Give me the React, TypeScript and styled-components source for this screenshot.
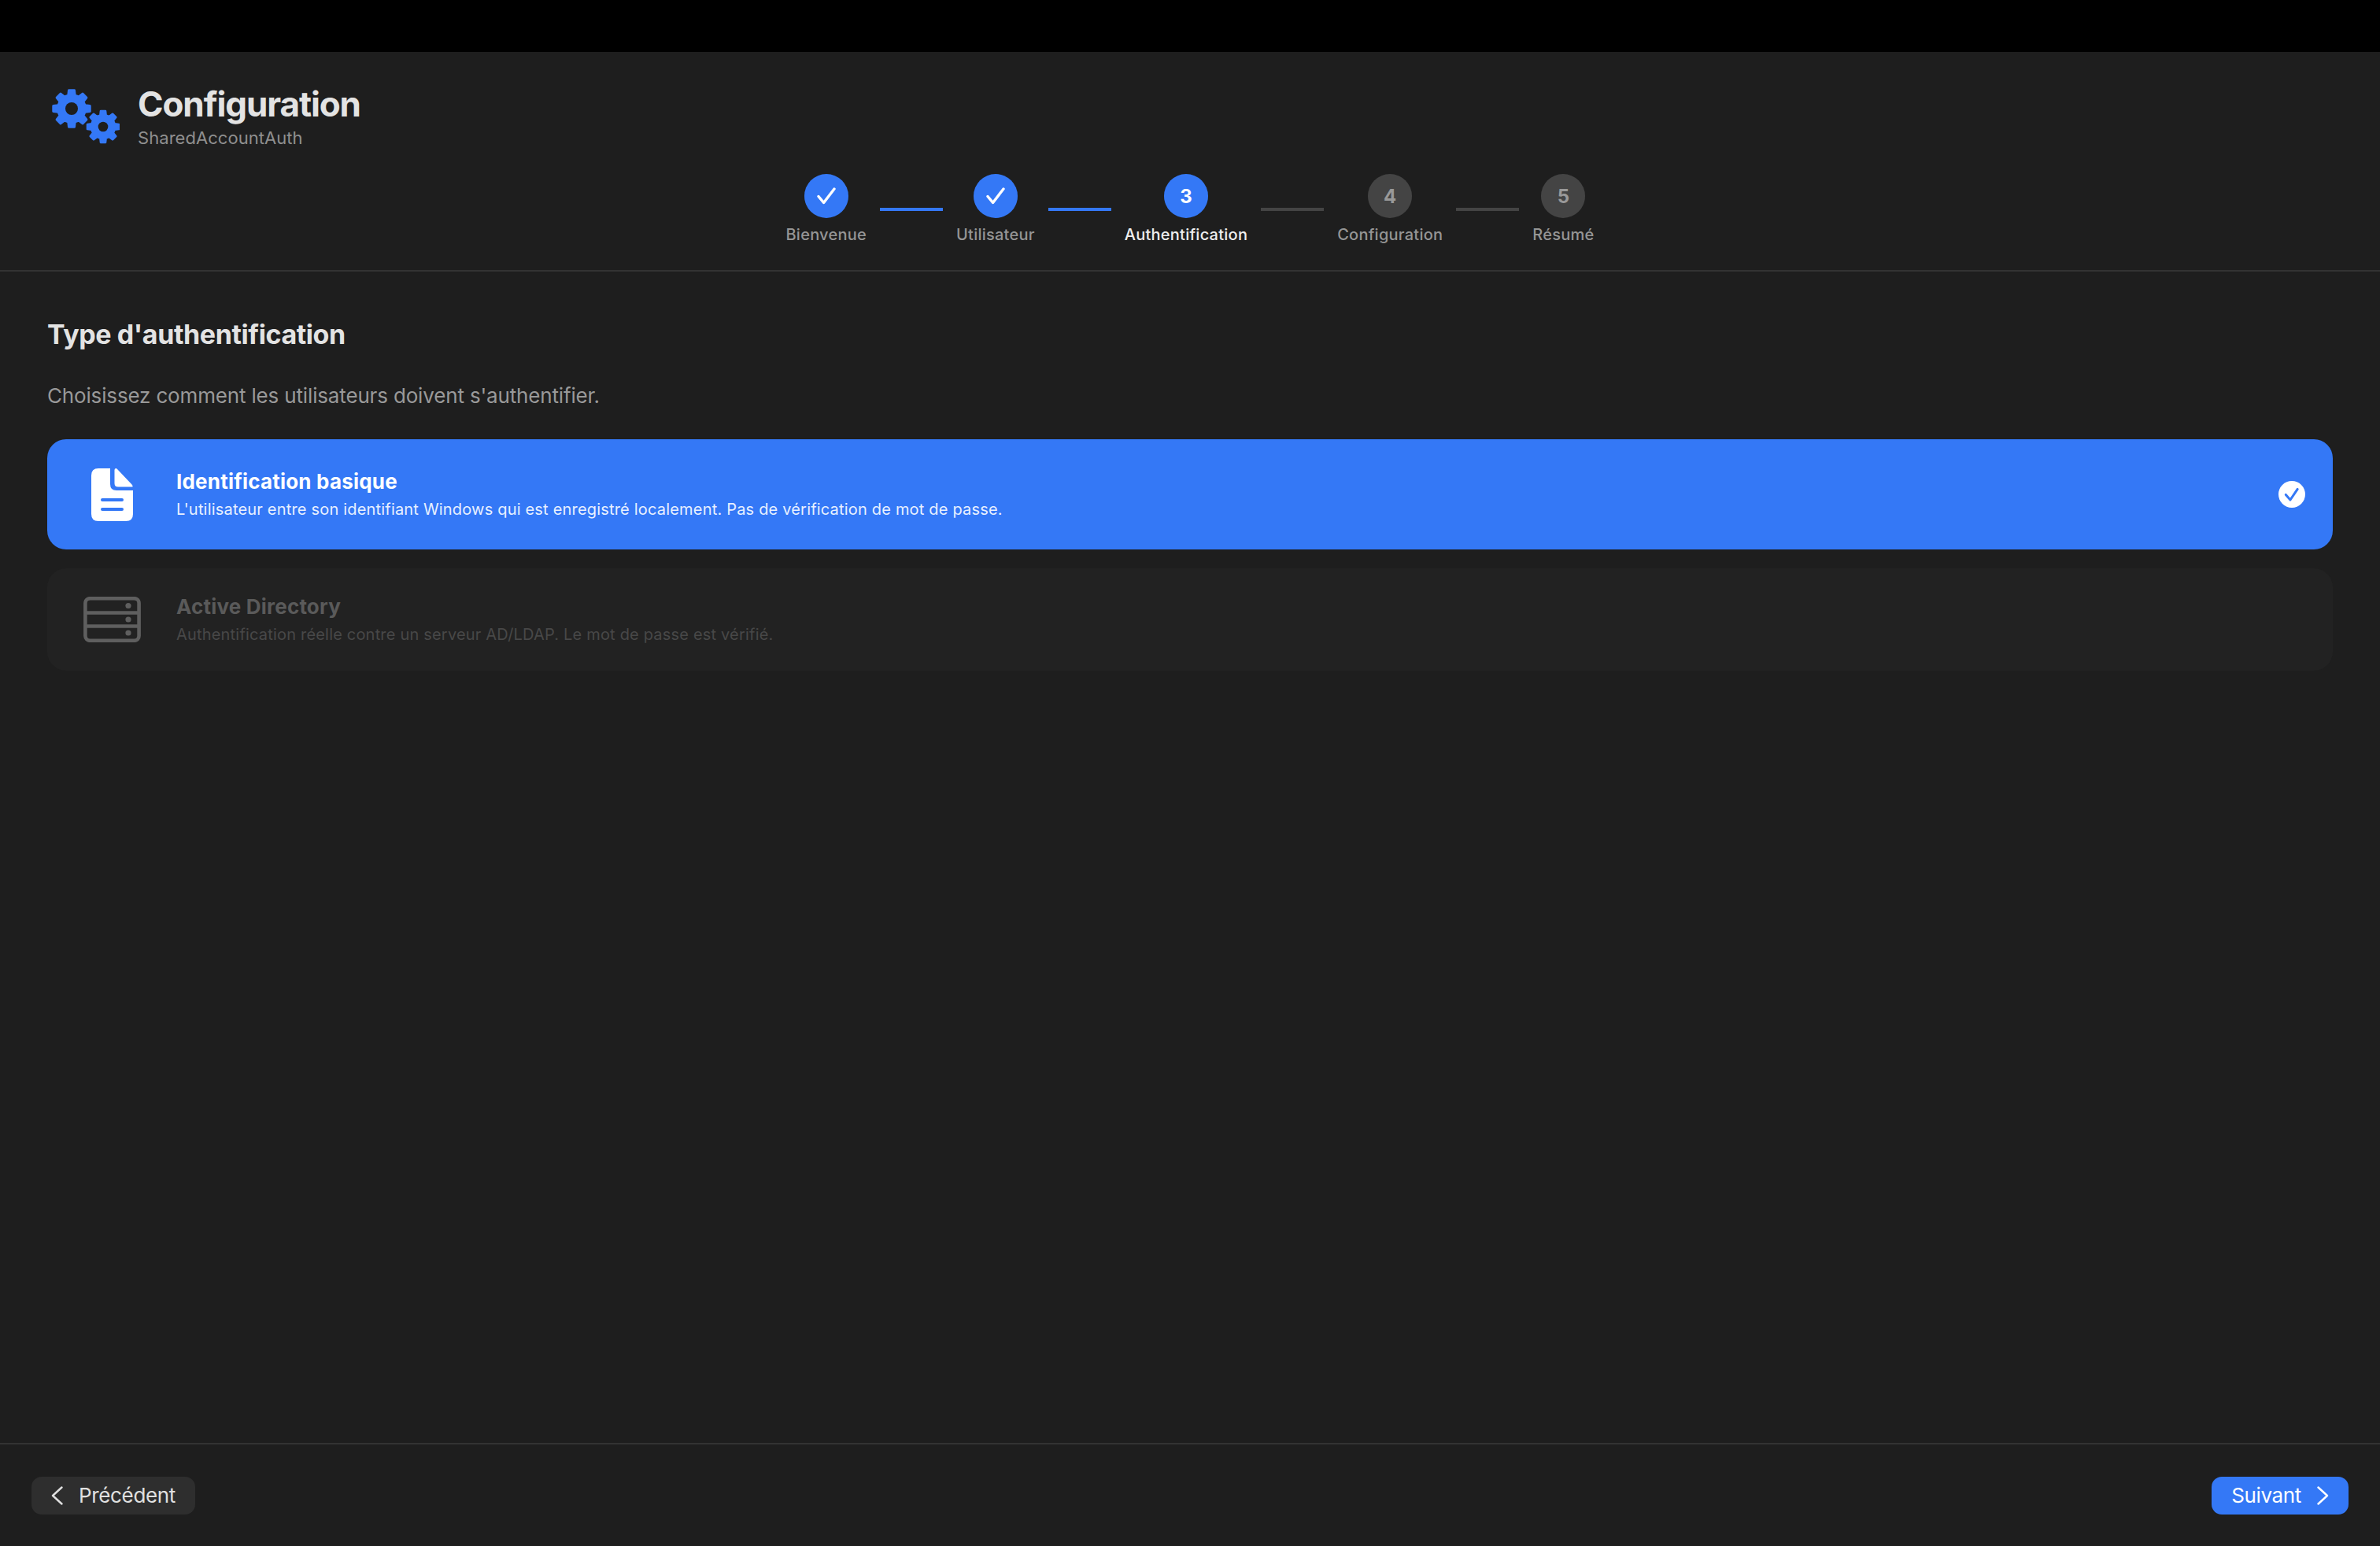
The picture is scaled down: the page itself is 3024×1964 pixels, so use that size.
import React from "react";
import styled, { createGlobalStyle } from "styled-components";

const BLUE = "#3478f6";
const BG = "#1e1e1e";

const Global = createGlobalStyle`
  html, body { margin: 0; padding: 0; background: ${BG}; }
  body { font-family: Inter, "Liberation Sans", sans-serif; -webkit-font-smoothing: antialiased; }
  * { box-sizing: border-box; }
`;

const Page = styled.div`
  width: 3024px;
  height: 1964px;
  display: flex;
  flex-direction: column;
  background: ${BG};
  overflow: hidden;
`;
const TopBar = styled.div`
  height: 66px;
  flex: none;
  background: #000;
`;
const Header = styled.header`
  height: 279px;
  flex: none;
  padding: 47px 66px 0;
  border-bottom: 2px solid #333;
`;
const Brand = styled.div`
  display: flex;
  align-items: flex-start;
  gap: 23px;
  height: 70px;
`;
const BrandText = styled.div`
  display: flex;
  flex-direction: column;
  margin-top: -3px;
`;
const AppTitle = styled.h1`
  margin: 0;
  font-size: 44px;
  line-height: 44px;
  font-weight: 700;
  color: #e3e3e3;
  letter-spacing: -1.1px;
`;
const AppSub = styled.div`
  margin-top: 7px;
  font-size: 22px;
  line-height: 28px;
  color: #8f8f8f;
  letter-spacing: 0.05px;
`;
const Stepper = styled.div`
  display: flex;
  justify-content: center;
  align-items: center;
  gap: 17px;
  margin-top: 38px;
`;
const Step = styled.div`
  display: flex;
  flex-direction: column;
  align-items: center;
  gap: 9px;
`;
const Dot = styled.div<{ $on: boolean }>`
  width: 56px;
  height: 56px;
  border-radius: 50%;
  display: flex;
  align-items: center;
  justify-content: center;
  background: ${(p) => (p.$on ? BLUE : "#444")};
  color: ${(p) => (p.$on ? "#fff" : "#999")};
  font-size: 24px;
  font-weight: 700;
`;
const StepLabel = styled.div<{ $active: boolean }>`
  font-size: 20px;
  line-height: 24px;
  font-weight: 500;
  letter-spacing: 0.25px;
  white-space: nowrap;
  color: ${(p) => (p.$active ? "#eee" : "#959595")};
`;
const Connector = styled.div<{ $on: boolean }>`
  width: 80px;
  height: 4px;
  background: ${(p) => (p.$on ? BLUE : "#444")};
`;
const Main = styled.main`
  flex: 1;
  padding: 59px 60px 0;
`;
const SectionTitle = styled.h2`
  margin: 0;
  font-size: 34px;
  line-height: 42px;
  font-weight: 700;
  color: #e3e3e3;
  letter-spacing: -0.41px;
`;
const SectionText = styled.p`
  margin: 41px 0 0;
  font-size: 26px;
  line-height: 32px;
  letter-spacing: -0.16px;
  color: #999;
`;
const Cards = styled.div`
  margin-top: 39px;
  display: flex;
  flex-direction: column;
  gap: 24px;
`;
const Card = styled.div<{ $on: boolean }>`
  display: flex;
  align-items: center;
  padding: 36px 35px 36px 36px;
  border-radius: 24px;
  background: ${(p) => (p.$on ? BLUE : "#222")};
`;
const IconSlot = styled.div<{ $h: number }>`
  width: 92px;
  height: ${(p) => p.$h}px;
  flex: none;
  display: flex;
  justify-content: center;
  align-items: center;
`;
const CardBody = styled.div`
  flex: 1;
  margin-left: 36px;
  display: flex;
  flex-direction: column;
  gap: 13px;
`;
const CardTitle = styled.div<{ $on: boolean }>`
  font-size: 26px;
  line-height: 26px;
  font-weight: 700;
  letter-spacing: 0.2px;
  color: ${(p) => (p.$on ? "#fff" : "#5a5a5a")};
`;
const CardText = styled.div<{ $on: boolean }>`
  font-size: 20px;
  line-height: 19px;
  letter-spacing: 0.19px;
  color: ${(p) => (p.$on ? "#e8f0ff" : "#484848")};
`;
const Footer = styled.footer`
  height: 131px;
  flex: none;
  display: flex;
  align-items: center;
  justify-content: space-between;
  padding: 0 40px;
  border-top: 2px solid #333;
`;
const NavButton = styled.button<{ $primary?: boolean }>`
  height: 48px;
  display: flex;
  align-items: center;
  gap: 20px;
  padding: 0 25px;
  border: 0;
  border-radius: 13px;
  font-family: inherit;
  font-size: 26px;
  letter-spacing: -0.35px;
  background: ${(p) => (p.$primary ? BLUE : "#2e2e2e")};
  color: ${(p) => (p.$primary ? "#fff" : "#e0e0e0")};
`;

function gearPath(cx: number, cy: number, r: number) {
  const n = 8;
  const step = (Math.PI * 2) / n;
  const pts: string[] = [];
  const sw = r * 0.12;
  const rO = r - sw / 2;
  const rR = r * 0.76 - sw / 2;
  const pt = (rad: number, a: number) =>
    `${(cx + rad * Math.sin(a)).toFixed(2)} ${(cy - rad * Math.cos(a)).toFixed(2)}`;
  for (let i = 0; i < n; i++) {
    const a = i * step;
    pts.push(pt(rR, a - 0.31 * step), pt(rO, a - 0.19 * step), pt(rO, a + 0.19 * step), pt(rR, a + 0.31 * step));
  }
  return `M${pts.join("L")}Z`;
}

const Gears = () => (
  <svg width="86" height="70" viewBox="0 0 86 70" style={{ flex: "none" }}>
    <path d={gearPath(25, 25, 25)} fill={BLUE} stroke={BLUE} strokeWidth={3} strokeLinejoin="round" />
    <circle cx="25" cy="25" r="8" fill={BG} />
    <path d={gearPath(65, 48, 21.5)} fill={BLUE} stroke={BLUE} strokeWidth={2.6} strokeLinejoin="round" />
    <circle cx="65" cy="48" r="6.3" fill={BG} />
  </svg>
);

const Check = () => (
  <svg width="24" height="22" viewBox="0 0 24 22" fill="none">
    <path d="M2 11.5 L8.6 19.5 L22 2" stroke="#fff" strokeWidth="3.4" strokeLinecap="round" strokeLinejoin="round" />
  </svg>
);

const DocIcon = () => (
  <svg width="53" height="67" viewBox="0 0 53 67">
    <path d="M9 0H24V20Q24 28 32 28H53V58Q53 67 44 67H9Q0 67 0 58V9Q0 0 9 0Z" fill="#fff" />
    <path d="M29.5 2Q29.5 0 31.5 0Q32.5 0 33.5 1.5L51.5 20.5Q53 22 52.5 23.5H34Q29.5 23.5 29.5 19Z" fill="#fff" />
    <rect x="12" y="38" width="29" height="4" rx="2" fill={BLUE} />
    <rect x="12" y="50" width="29" height="4" rx="2" fill={BLUE} />
  </svg>
);

const ServerIcon = () => (
  <svg width="73" height="58" viewBox="0 0 73 58" fill="none">
    <rect x="2.4" y="2.2" width="68.2" height="53.6" rx="6" stroke="#5f5f5f" strokeWidth="4.6" />
    <path d="M2 20.5H71M2 37.5H71" stroke="#5f5f5f" strokeWidth="4.6" />
    <circle cx="57" cy="11.5" r="3.6" fill="#5f5f5f" />
    <circle cx="57" cy="29" r="3.6" fill="#5f5f5f" />
    <circle cx="57" cy="46" r="3.6" fill="#5f5f5f" />
  </svg>
);

const SelectedMark = () => (
  <svg width="34" height="34" viewBox="0 0 34 34" style={{ flex: "none" }}>
    <circle cx="17" cy="17" r="17" fill="#fff" />
    <path d="M9.3 17.4L15 24L24.2 10.4" fill="none" stroke={BLUE} strokeWidth="3" strokeLinecap="round" strokeLinejoin="round" />
  </svg>
);

const Chevron = ({ dir, color }: { dir: "left" | "right"; color: string }) => (
  <svg width="15" height="24" viewBox="0 0 15 24" fill="none" style={{ flex: "none" }}>
    <path
      d={dir === "left" ? "M13.5 1.5L2 12L13.5 22.5" : "M1.5 1.5L13 12L1.5 22.5"}
      stroke={color}
      strokeWidth="2.4"
      strokeLinecap="round"
      strokeLinejoin="round"
    />
  </svg>
);

const steps = ["Bienvenue", "Utilisateur", "Authentification", "Configuration", "Résumé"];
const current = 2;

export default function App() {
  return (
    <Page>
      <Global />
      <TopBar />
      <Header>
        <Brand>
          <Gears />
          <BrandText>
            <AppTitle>Configuration</AppTitle>
            <AppSub>SharedAccountAuth</AppSub>
          </BrandText>
        </Brand>
        <Stepper>
          {steps.map((s, i) => (
            <React.Fragment key={s}>
              <Step>
                <Dot $on={i <= current}>{i < current ? <Check /> : i + 1}</Dot>
                <StepLabel $active={i === current}>{s}</StepLabel>
              </Step>
              {i < steps.length - 1 && <Connector $on={i < current} />}
            </React.Fragment>
          ))}
        </Stepper>
      </Header>
      <Main>
        <SectionTitle>Type d'authentification</SectionTitle>
        <SectionText>Choisissez comment les utilisateurs doivent s'authentifier.</SectionText>
        <Cards>
          <Card $on>
            <IconSlot $h={68}>
              <DocIcon />
            </IconSlot>
            <CardBody>
              <CardTitle $on>Identification basique</CardTitle>
              <CardText $on>
                L'utilisateur entre son identifiant Windows qui est enregistré localement. Pas de vérification de mot de passe.
              </CardText>
            </CardBody>
            <SelectedMark />
          </Card>
          <Card $on={false}>
            <IconSlot $h={58}>
              <ServerIcon />
            </IconSlot>
            <CardBody>
              <CardTitle $on={false}>Active Directory</CardTitle>
              <CardText $on={false}>Authentification réelle contre un serveur AD/LDAP. Le mot de passe est vérifié.</CardText>
            </CardBody>
          </Card>
        </Cards>
      </Main>
      <Footer>
        <NavButton>
          <Chevron dir="left" color="#e0e0e0" />
          Précédent
        </NavButton>
        <NavButton $primary>
          Suivant
          <Chevron dir="right" color="#fff" />
        </NavButton>
      </Footer>
    </Page>
  );
}
